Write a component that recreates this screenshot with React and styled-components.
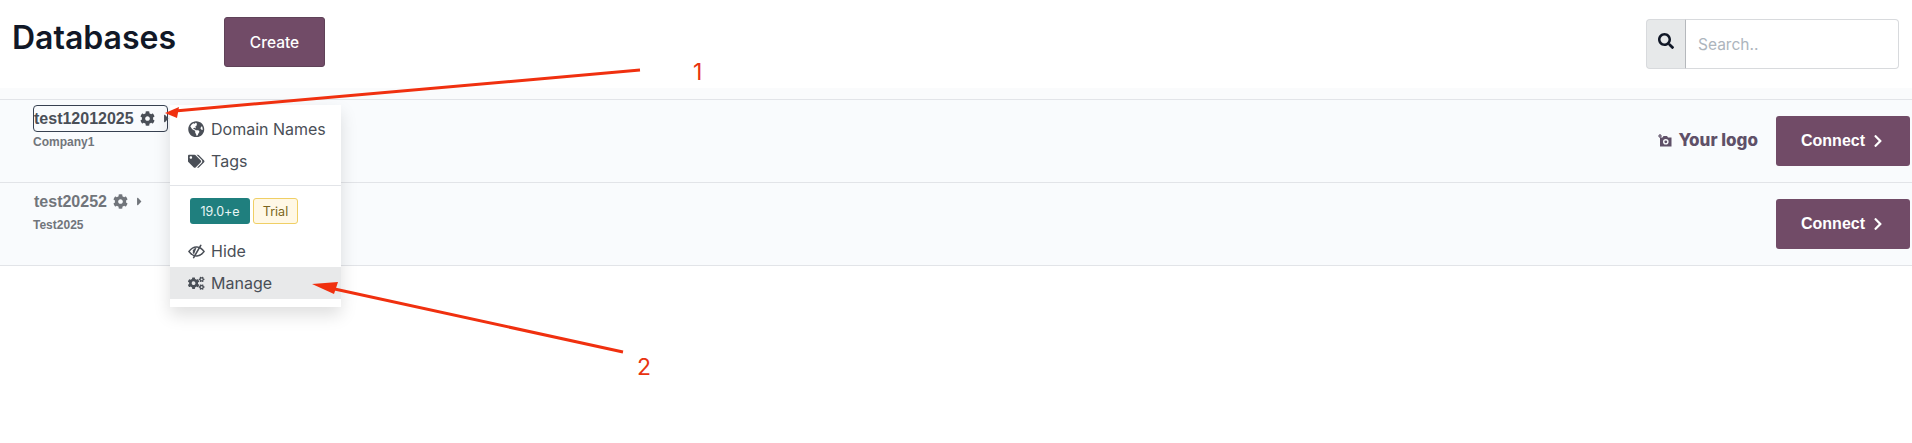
import React from 'react'
import styled, { createGlobalStyle } from 'styled-components'
import {
  FaCaretRight,
  FaChevronRight,
  FaCog,
  FaCogs,
  FaGlobeAmericas,
  FaSearch,
  FaTags,
} from 'react-icons/fa'

const GlobalStyle = createGlobalStyle`
  html, body {
    margin: 0;
    background: #fff;
    font-family: Inter, "Noto Sans", sans-serif;
    overflow: hidden;
  }
`

const EyeSlash = () => (
  <svg width="18" height="15" viewBox="0 0 18 15" fill="none">
    <path d="M1 7.5 C4 3.5 7 2.6 9.5 2.8 C12.5 3 15 4.8 17 7.5 C15 10.2 12.5 12 9.5 12.2 C7 12.4 4 11.5 1 7.5 Z" stroke="currentColor" strokeWidth="1.5" />
    <path d="M9 3.5 A4 4 0 0 0 6.4 10.5 Z" fill="currentColor" />
    <path d="M13.5 1 L6 14" stroke="currentColor" strokeWidth="1.7" strokeLinecap="round" />
  </svg>
)

const CameraPlus = () => (
  <svg width="15" height="14" viewBox="0 0 15 14" fill="currentColor">
    <path d="M3 1 V5 M1 3 H5" stroke="currentColor" strokeWidth="1.2" />
    <path fillRule="evenodd" d="M3 4.5 H5.5 L6.5 3 H10 L11 4.5 H14.5 V13.5 H3 Z M8.8 6 A2.8 2.8 0 1 0 8.8 11.6 A2.8 2.8 0 1 0 8.8 6 Z M8.8 7.4 A1.4 1.4 0 1 1 8.8 10.2 A1.4 1.4 0 1 1 8.8 7.4 Z" />
  </svg>
)

export default function App() {
  return (
    <Page>
      <GlobalStyle />
      <Header>
        <Title>Databases</Title>
        <CreateBtn>Create</CreateBtn>
        <SearchBox>
          <SearchAddon><FaSearch /></SearchAddon>
          <SearchInput placeholder="Search.." />
        </SearchBox>
      </Header>
      <List>
        <Row>
          <NameBlock>
            <Dropdown>
              <Toggle $focused>
                test12012025 <GearIcon /> <CaretIcon />
              </Toggle>
              <Menu>
                <MenuItem><IconSlot><FaGlobeAmericas /></IconSlot>Domain Names</MenuItem>
                <MenuItem><IconSlot><FaTags /></IconSlot>Tags</MenuItem>
                <Divider />
                <BadgeRow>
                  <VersionBadge>19.0+e</VersionBadge>
                  <TrialBadge>Trial</TrialBadge>
                </BadgeRow>
                <MenuItem><IconSlot><EyeSlash /></IconSlot>Hide</MenuItem>
                <MenuItem $active><IconSlot><FaCogs /></IconSlot>Manage</MenuItem>
              </Menu>
            </Dropdown>
            <Company>Company1</Company>
          </NameBlock>
          <RowActions>
            <LogoLink><CameraPlus />Your logo</LogoLink>
            <ConnectBtn>Connect <FaChevronRight /></ConnectBtn>
          </RowActions>
        </Row>
        <Row>
          <NameBlock>
            <Toggle>
              test20252 <GearIcon /> <CaretIcon />
            </Toggle>
            <Company>Test2025</Company>
          </NameBlock>
          <RowActions>
            <ConnectBtn>Connect <FaChevronRight /></ConnectBtn>
          </RowActions>
        </Row>
      </List>

      {/* annotations drawn on top of the screenshot */}
      <Arrows viewBox="0 0 1912 443">
        <line x1="640" y1="70" x2="175" y2="111" stroke="#f0300f" strokeWidth="3" />
        <path d="M165 113 L179 107 L177 118 Z" fill="#f0300f" />
        <line x1="623" y1="352" x2="330" y2="288" stroke="#f0300f" strokeWidth="3" />
        <path d="M312 284 L338 282 L334 294 Z" fill="#f0300f" />
      </Arrows>
      <Note $x={693} $y={58}>1</Note>
      <Note $x={637} $y={353}>2</Note>
    </Page>
  )
}

const Page = styled.div`
  position: relative;
  width: 1912px;
  height: 443px;
  overflow: hidden;
`
const Header = styled.div`
  display: flex;
  align-items: flex-start;
  height: 88px;
  padding: 17px 13px 0 12px;
  box-sizing: border-box;
`
const Title = styled.h1`
  margin: 0;
  width: 212px;
  font-size: 32px;
  line-height: 42px;
  font-weight: 600;
  color: #111827;
`
const CreateBtn = styled.button`
  width: 101px;
  height: 50px;
  border: 1px solid #5f4258;
  border-radius: 3px;
  background: #714b67;
  color: #fff;
  font: 500 15.5px Inter, sans-serif;
`
const SearchBox = styled.div`
  display: flex;
  margin-left: auto;
  margin-top: 2px;
  width: 253px;
  height: 50px;
`
const SearchAddon = styled.span`
  display: flex;
  align-items: center;
  justify-content: center;
  width: 40px;
  padding-bottom: 6px;
  box-sizing: border-box;
  background: #e7e9ea;
  border: 1px solid #d8dadd;
  border-right-color: #b5b8bc;
  border-radius: 4px 0 0 4px;
  color: #111827;
  font-size: 16px;
`
const SearchInput = styled.input`
  flex: 1;
  min-width: 0;
  padding: 0 12px;
  border: 1px solid #d8dadd;
  border-left: 0;
  border-radius: 0 4px 4px 0;
  font: 400 15.5px Inter, sans-serif;
  outline: none;
  &::placeholder {
    color: #adb5bd;
  }
`
const List = styled.div`
  background: #fafbfc;
  padding-top: 11px;
`
const Row = styled.div`
  display: flex;
  justify-content: space-between;
  height: 83px;
  box-sizing: border-box;
  border-top: 1px solid #e2e4e8;
  background: #f9fbfd;
  padding: 5px 2px 0 33px;
  &:last-child {
    height: 84px;
    border-bottom: 1px solid #e2e4e8;
  }
`
const NameBlock = styled.div`
  display: flex;
  flex-direction: column;
  align-items: flex-start;
`
const Dropdown = styled.div`
  position: relative;
  z-index: 2;
`
const Toggle = styled.div`
  display: flex;
  align-items: center;
  gap: 4px;
  width: 135px;
  height: 27px;
  box-sizing: border-box;
  padding-left: 0;
  border: 1px solid ${(p) => (p.$focused ? '#374151' : 'transparent')};
  border-radius: 4px;
  color: ${(p) => (p.$focused ? '#4a4f57' : '#71757b')};
  font: 700 16px "Liberation Sans", Arial, sans-serif;
  white-space: nowrap;
`
const GearIcon = styled(FaCog)`
  flex: none;
  font-size: 15px;
  margin-left: 2px;
`
const CaretIcon = styled(FaCaretRight)`
  flex: none;
  font-size: 13px;
  margin-left: 1px;
`
const Company = styled.div`
  margin-top: 3px;
  color: #71757b;
  font: 700 12px "Liberation Sans", Arial, sans-serif;
`
const Menu = styled.div`
  position: absolute;
  left: 137px;
  top: 0;
  width: 171px;
  height: 202px;
  box-sizing: border-box;
  padding-top: 8px;
  background: #fff;
  box-shadow: 0 8px 16px rgba(0, 0, 0, 0.13);
`
const MenuItem = styled.div`
  display: flex;
  align-items: center;
  height: 32px;
  padding-left: 18px;
  background: ${(p) => (p.$active ? '#e8e9ea' : 'transparent')};
  color: #4a4f57;
  font-size: 16px;
`
const IconSlot = styled.span`
  display: flex;
  justify-content: center;
  width: 17px;
  margin-right: 6px;
  font-size: 16.5px;
  color: #4a4f57;
`
const Divider = styled.div`
  margin-top: 8px;
  border-top: 1px solid #e2e4e8;
`
const BadgeRow = styled.div`
  display: flex;
  gap: 3px;
  padding: 12px 0 11px 20px;
`
const VersionBadge = styled.span`
  display: flex;
  align-items: center;
  justify-content: center;
  width: 60px;
  height: 26px;
  border-radius: 3px;
  background: #1f7f7e;
  color: #e8f5f5;
  font-size: 12.5px;
`
const TrialBadge = styled.span`
  display: flex;
  align-items: center;
  justify-content: center;
  width: 45px;
  height: 26px;
  box-sizing: border-box;
  border: 1px solid #f0cf65;
  border-radius: 3px;
  background: #fff8e6;
  color: #7a6520;
  font-size: 12.5px;
`
const RowActions = styled.div`
  display: flex;
  align-items: flex-start;
  padding-top: 11px;
`
const LogoLink = styled.span`
  display: flex;
  align-items: center;
  gap: 6px;
  margin: 14px 18px 0 0;
  color: #5f5068;
  font-size: 17px;
  font-weight: 800;
`
const ConnectBtn = styled.button`
  display: flex;
  align-items: center;
  justify-content: center;
  gap: 6px;
  width: 134px;
  height: 50px;
  border: 0;
  border-radius: 3px;
  background: #714b67;
  color: #fff;
  font: 700 16px "Liberation Sans", Arial, sans-serif;
  svg {
    font-size: 14px;
  }
`
const Arrows = styled.svg`
  position: absolute;
  inset: 0;
  z-index: 5;
  width: 1912px;
  height: 443px;
  pointer-events: none;
`
const Note = styled.span`
  position: absolute;
  z-index: 5;
  left: ${(p) => p.$x}px;
  top: ${(p) => p.$y}px;
  color: #e8330f;
  font-size: 23px;
  line-height: 28px;
`
